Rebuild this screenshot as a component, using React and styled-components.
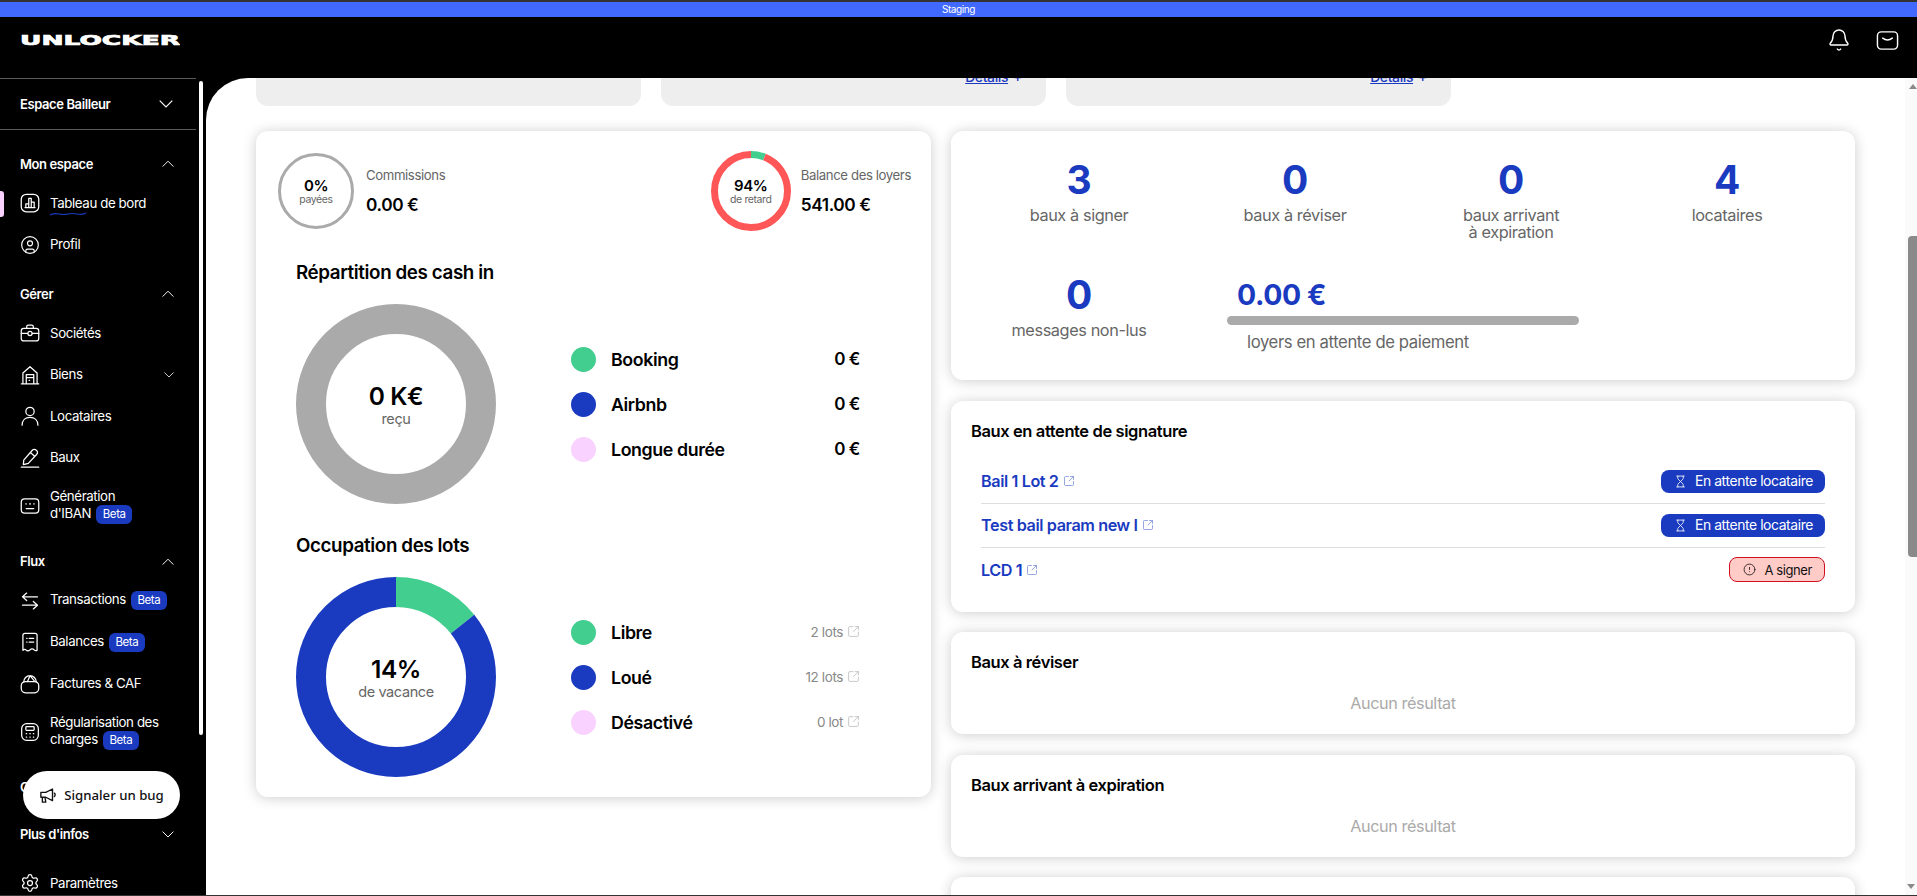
import React from "react";
import styled, { createGlobalStyle } from "styled-components";
import {
  Bell,
  CircleAlert,
  CircleUser,
  Hourglass,
  Settings,
  SquareArrowOutUpRight,
} from "lucide-react";

const BLUE = "#1a3bbf";
const GREEN = "#41ce8e";
const PINK = "#fad2ff";
const RED = "#ff5757";
const GREY = "#aaaaaa";

const GlobalStyle = createGlobalStyle`
  html, body {
    margin: 0;
    height: 100%;
    overflow: hidden;
    background: #000;
  }
  body {
    font-family: "Inter", "Liberation Sans", sans-serif;
    letter-spacing: -0.025em;
  }
  #root { height: 100%; }
`;

const Page = styled.div`
  height: 100vh;
  box-sizing: border-box;
  display: flex;
  flex-direction: column;
  border-top: 2px solid #333;
  border-bottom: 1px solid #333;
  position: relative;
`;

const EnvBar = styled.div`
  height: 15px;
  flex: none;
  background: #4169ff;
  color: #fff;
  font-size: 10px;
  line-height: 15px;
  text-align: center;
`;

const Header = styled.header`
  height: 61px;
  box-sizing: border-box;
  flex: none;
  background: #000;
  display: flex;
  align-items: center;
  justify-content: space-between;
  padding: 0 18px 15px 20px;
  color: #fff;
`;

const LogoText = styled.text`
  font-family: "DejaVu Sans", sans-serif;
  font-weight: 700;
  font-size: 14px;
  letter-spacing: 0;
  fill: #fff;
  stroke: #fff;
  stroke-width: 0.7px;
`;

const HeaderIcons = styled.div`
  display: flex;
  align-items: center;
  gap: 25px;
`;

const Body = styled.div`
  flex: 1;
  min-height: 0;
  display: flex;
`;

const Sidebar = styled.aside`
  width: 206px;
  flex: none;
  background: #000;
  color: #fff;
  overflow: hidden;
  position: relative;
  font-size: 13.3px;
`;

const SideThumb = styled.div`
  position: absolute;
  left: 199px;
  top: 3px;
  width: 4px;
  height: 654px;
  border-radius: 2px;
  background: #fff;
`;

const SpaceRow = styled.div`
  width: 196px;
  height: 52px;
  box-sizing: border-box;
  border-top: 1px solid #5a5a5a;
  border-bottom: 1px solid #5a5a5a;
  display: flex;
  align-items: center;
  justify-content: space-between;
  padding: 0 23px 0 20px;
  font-weight: 600;
  font-size: 13px;
  margin-bottom: 15px;
`;

const Group = styled.div`
  width: 196px;
  margin-bottom: ${(p) => (p.$tight ? "9.5px" : "9.5px")};
`;

const GroupHead = styled.div`
  height: 37.5px;
  display: flex;
  align-items: center;
  justify-content: space-between;
  padding: 0 22px 0 20px;
  font-weight: 600;
  font-size: 13px;
`;

const Item = styled.div`
  position: relative;
  height: ${(p) => (p.$tall ? "54.5px" : "41.5px")};
  display: flex;
  align-items: center;
  gap: 10px;
  padding: 0 22px 0 20px;
  line-height: 17px;
`;

const ActiveMark = styled.span`
  position: absolute;
  left: 0;
  top: 8px;
  width: 4px;
  height: 26px;
  border-radius: 0 3px 3px 0;
  background: ${PINK};
`;

const ItemIcon = styled.span`
  width: 20px;
  flex: none;
  display: flex;
  justify-content: center;
`;

const ItemLabel = styled.span`
  flex: 1;
  position: relative;
`;

const Squiggle = styled.svg`
  position: absolute;
  left: 0;
  top: 17px;
`;

const Beta = styled.span`
  display: inline-block;
  width: 36px;
  height: 19px;
  margin-left: 5px;
  border-radius: 6px;
  background: ${BLUE};
  color: #fff;
  font-size: 11.5px;
  line-height: 19px;
  text-align: center;
  vertical-align: middle;
`;

const BugButton = styled.button`
  position: absolute;
  left: 23px;
  bottom: 76px;
  width: 157px;
  height: 48px;
  border: 0;
  border-radius: 24px;
  background: #fff;
  color: #111;
  display: flex;
  align-items: center;
  justify-content: center;
  gap: 7px;
  font-family: "Noto Sans", sans-serif;
  font-size: 13.2px;
  font-weight: 500;
  letter-spacing: 0;
`;

const Main = styled.main`
  flex: 1;
  min-width: 0;
  display: flex;
  background: #fff;
  border-top-left-radius: 42px;
  overflow: hidden;
`;

const Content = styled.div`
  flex: 1;
  min-width: 0;
  padding-left: 50px;
`;

const ScrollTrack = styled.div`
  width: 12px;
  flex: none;
  background: #fafafa;
  display: flex;
  flex-direction: column;
  align-items: flex-end;
`;

const ScrollArrow = styled.span`
  width: 0;
  height: 0;
  margin: ${(p) => (p.$down ? "auto 2px 6px 0" : "6px 0 0 0")};
  border-left: 4px solid transparent;
  border-right: 4px solid transparent;
  ${(p) => (p.$down ? "border-top" : "border-bottom")}: 5px solid #8a8a8a;
`;

const ScrollThumb = styled.div`
  width: 9px;
  height: 321px;
  margin-top: 147px;
  border-radius: 4px 0 0 4px;
  background: #8a8a8a;
`;

const SummaryRow = styled.div`
  display: flex;
  gap: 20px;
  margin-bottom: 25px;
`;

const SummaryCard = styled.div`
  width: 385px;
  height: 28px;
  box-sizing: border-box;
  overflow: hidden;
  display: flex;
  align-items: flex-end;
  justify-content: flex-end;
  padding: 0 24px 21px 0;
  background: #eeeeee;
  border-radius: 0 0 12px 12px;
`;

const DetailsLink = styled.a`
  color: ${BLUE};
  font-size: 14px;
  font-weight: 500;
  line-height: 16px;
  white-space: nowrap;
  span {
    display: inline-block;
    margin-left: 5px;
  }
  u {
    text-decoration-thickness: 1px;
  }
`;

const Columns = styled.div`
  display: grid;
  grid-template-columns: 675px 904px;
  gap: 20px;
  align-items: start;
`;

const Card = styled.section`
  background: #fff;
  border-radius: 12px;
  box-shadow: 0 1px 14px rgba(0, 0, 0, 0.2);
`;

const LeftCard = styled(Card)`
  padding: 20px 0;
`;

const StatsTop = styled.div`
  display: flex;
  justify-content: space-between;
  align-items: center;
  height: 80px;
  padding: 0 20px 0 22px;
`;

const StatGroup = styled.div`
  display: flex;
  align-items: center;
  gap: ${(p) => p.$gap}px;
`;

const RingBox = styled.div`
  display: grid;
  place-items: center;
  width: ${(p) => p.$size}px;
  height: ${(p) => p.$size}px;
  svg, div {
    grid-area: 1 / 1;
  }
`;

const RingText = styled.div`
  text-align: center;
`;

const RingValue = styled.div`
  font-size: ${(p) => (p.$large ? "24.5px" : "15px")};
  font-weight: 600;
  line-height: ${(p) => (p.$large ? "28px" : "17px")};
  color: #000;
`;

const RingCaption = styled.div`
  font-size: ${(p) => (p.$large ? "14.5px" : "10.5px")};
  line-height: ${(p) => (p.$large ? "15px" : "12px")};
  color: #666;
  margin-top: ${(p) => (p.$large ? "1px" : "0")};
`;

const StatName = styled.div`
  font-size: 13.2px;
  line-height: 17px;
  color: #666;
  margin-bottom: 11px;
`;

const StatValue = styled.div`
  font-size: 17.3px;
  font-weight: 600;
  line-height: 20px;
  color: #000;
`;

const ChartTitle = styled.h2`
  margin: 30px 0 19px 40px;
  font-size: 18.8px;
  font-weight: 600;
  line-height: 24px;
  color: #000;
`;

const ChartRow = styled.div`
  display: flex;
  align-items: center;
  gap: 75px;
  padding: 0 71px 0 40px;
`;

const Legend = styled.div`
  flex: 1;
  display: flex;
  flex-direction: column;
  gap: 20px;
`;

const LegendRow = styled.div`
  height: 25px;
  display: flex;
  align-items: center;
  gap: 15px;
`;

const Dot = styled.span`
  width: 25px;
  height: 25px;
  flex: none;
  border-radius: 50%;
  background: ${(p) => p.$color};
`;

const LegendName = styled.span`
  flex: 1;
  font-size: 17.8px;
  font-weight: 600;
  color: #000;
`;

const LegendAmount = styled.span`
  font-size: 17px;
  font-weight: 600;
  color: #000;
`;

const LegendLots = styled.span`
  display: flex;
  align-items: center;
  gap: 4px;
  font-size: 13.5px;
  color: #888;
  svg {
    color: #bbb;
    margin-top: -2px;
  }
`;

const RightColumn = styled.div`
  display: flex;
  flex-direction: column;
  gap: 20.5px;
`;

const KpiCard = styled(Card)`
  height: 249px;
  box-sizing: border-box;
  padding: 27px 20px 0;
  display: grid;
  grid-template-columns: repeat(4, 216px);
  grid-template-rows: 82px auto;
  row-gap: 33px;
`;

const Kpi = styled.div`
  text-align: center;
`;

const KpiValue = styled.div`
  font-size: 39px;
  font-weight: 700;
  line-height: 44px;
  color: ${BLUE};
`;

const KpiLabel = styled.div`
  margin-top: 5px;
  font-size: 16.3px;
  line-height: 17px;
  color: #666;
`;

const MoneyKpi = styled.div`
  grid-column: span 2;
  padding: 2px 40px 0;
`;

const MoneyValue = styled.div`
  padding-left: 10px;
  font-size: 28.4px;
  font-weight: 700;
  line-height: 40px;
  color: ${BLUE};
`;

const MoneyBar = styled.div`
  height: 9px;
  margin-top: 1px;
  border-radius: 5px;
  background: ${GREY};
`;

const MoneyLabel = styled(KpiLabel)`
  margin-top: 9px;
  padding-left: 20px;
  font-size: 16.7px;
`;

const ListCard = styled(Card)`
  padding: 20px 20px 21px;
`;

const LeaseCard = styled(ListCard)`
  padding-bottom: 20px;
`;

const CardTitle = styled.h3`
  margin: 0;
  font-size: 16.5px;
  font-weight: 600;
  line-height: 20px;
  color: #000;
`;

const LeaseList = styled.div`
  margin: 19px 10px 0;
`;

const LeaseRow = styled.div`
  height: 44px;
  box-sizing: border-box;
  display: flex;
  align-items: center;
  justify-content: space-between;
  border-bottom: 1px solid #dedede;
  &:last-child {
    border-bottom: 0;
  }
`;

const LeaseLink = styled.a`
  display: flex;
  align-items: center;
  gap: 4px;
  color: ${BLUE};
  font-size: 16.2px;
  font-weight: 600;
  svg {
    opacity: 0.6;
  }
`;

const Status = styled.span`
  display: flex;
  align-items: center;
  box-sizing: border-box;
  gap: 8px;
  height: ${(p) => (p.$alert ? "25px" : "23px")};
  padding: 0 12px 0 13px;
  border-radius: 8px;
  font-size: ${(p) => (p.$alert ? "13px" : "13.9px")};
  background: ${(p) => (p.$alert ? "#ffcbc6" : BLUE)};
  color: ${(p) => (p.$alert ? "#111" : "#fff")};
  border: ${(p) => (p.$alert ? "1px solid #d01020" : "0")};
`;

const EmptyText = styled.div`
  margin-top: 21px;
  height: 20px;
  font-size: 16.2px;
  line-height: 20px;
  text-align: center;
  color: #aaa;
`;

const Glyph = ({ size = 20, width = 1.5, children }) => (
  <svg
    width={size}
    height={size}
    viewBox="0 0 24 24"
    fill="none"
    stroke="currentColor"
    strokeWidth={width}
    strokeLinecap="round"
    strokeLinejoin="round"
  >
    {children}
  </svg>
);

const icons = {
  board: (
    <Glyph>
      <rect x="1.5" y="1.5" width="21" height="21" rx="6" />
      <path d="M6 17.5h12M7 17.5V13h3.5M10.5 17.5V6.5h3v11M13.5 11H17v6.5" />
    </Glyph>
  ),
  case: (
    <Glyph>
      <rect x="1.5" y="6.5" width="21" height="15" rx="3" />
      <path d="M8 6.5V4.5a2 2 0 0 1 2-2h4a2 2 0 0 1 2 2v2M1.5 12.5h7.5M15 12.5h7.5" />
      <circle cx="12" cy="12.5" r="2.5" />
    </Glyph>
  ),
  barn: (
    <Glyph size={22}>
      <path d="M1.5 22.5h21M3.5 22.5V9.5L12 2l8.5 7.5v13M7.5 22.5V11.5h9v11M7.5 15h9M11 18.5h.5" />
    </Glyph>
  ),
  user: (
    <Glyph>
      <circle cx="12" cy="6.5" r="5" />
      <path d="M2.5 23c0-6 4-9.5 9.5-9.5s9.5 3.5 9.5 9.5" />
    </Glyph>
  ),
  pencil: (
    <Glyph>
      <path d="M4.5 14.5 14.5 3a3.6 3.6 0 0 1 5.4 4.8L10 18.5l-6 1.5zM12.5 5.5l5 4.5M1.5 23h21" />
    </Glyph>
  ),
  iban: (
    <Glyph>
      <rect x="1.5" y="3.5" width="21" height="17" rx="4" />
      <path d="M7 9.5h.5M11.5 9.5h1M16.5 9.5h.5M7.5 15h9" />
    </Glyph>
  ),
  swap: (
    <Glyph>
      <path d="M8 2.5 3 7l5 4.5M3 7h18M16 12.5l5 4.5-5 4.5M21 17H3" />
    </Glyph>
  ),
  receipt: (
    <Glyph>
      <path d="M6 1.5h12a2.5 2.5 0 0 1 2.5 2.5v18q-2 1-3.5-.5-2.5-2.5-5 0-2.5 2.5-5 0-1.5-1.5-3.5.5V4A2.5 2.5 0 0 1 6 1.5zM8 7.5h.5M11 7.5h5.5M8 12h.5M11 12h5.5" />
    </Glyph>
  ),
  bag: (
    <Glyph>
      <rect x="1.5" y="9" width="21" height="13.5" rx="5" />
      <path d="M4.5 9.5a7.5 7.5 0 0 1 15 0M12 2l-3 7M12 2l5 6" />
    </Glyph>
  ),
  calc: (
    <Glyph>
      <rect x="2" y="2" width="20" height="20" rx="6" />
      <rect x="7" y="5.5" width="10" height="4.5" rx="1" />
      <path d="M7.5 14h.5M11.8 14h.5M16 14h.5M7.5 18h.5M11.8 18h.5M16 18h.5" />
    </Glyph>
  ),
  gear: <Settings size={20} strokeWidth={1.5} />,
  profile: <CircleUser size={20} strokeWidth={1.4} />,
};

const Chevron = ({ up, width = 12 }) => (
  <svg width={width} height={width * 0.6} viewBox="0 0 20 12" fill="none" stroke="currentColor" strokeWidth="1.6">
    <polyline points={up ? "1,11 10,2 19,11" : "1,1 10,10 19,1"} />
  </svg>
);

const Donut = ({ size, stroke, segments, children }) => {
  const r = (size - stroke) / 2;
  const length = 2 * Math.PI * r;
  let used = 0;
  return (
    <RingBox $size={size}>
      <svg width={size} height={size} style={{ transform: "rotate(-90deg)" }}>
        {segments.map(([share, color]) => {
          const arc = (
            <circle
              key={color}
              cx={size / 2}
              cy={size / 2}
              r={r}
              fill="none"
              stroke={color}
              strokeWidth={stroke}
              strokeDasharray={`${share * length} ${length}`}
              strokeDashoffset={-used * length}
            />
          );
          used += share;
          return arc;
        })}
      </svg>
      <RingText>{children}</RingText>
    </RingBox>
  );
};

const navGroups = [
  {
    title: "Mon espace",
    items: [
      { label: ["Tableau de bord"], icon: "board", active: true },
      { label: ["Profil"], icon: "profile" },
    ],
  },
  {
    title: "Gérer",
    items: [
      { label: ["Sociétés"], icon: "case" },
      { label: ["Biens"], icon: "barn", more: true },
      { label: ["Locataires"], icon: "user" },
      { label: ["Baux"], icon: "pencil" },
      { label: ["Génération", "d'IBAN"], icon: "iban", beta: true },
    ],
  },
  {
    title: "Flux",
    items: [
      { label: ["Transactions"], icon: "swap", beta: true },
      { label: ["Balances"], icon: "receipt", beta: true },
      { label: ["Factures & CAF"], icon: "bag" },
      { label: ["Régularisation des", "charges"], icon: "calc", beta: true },
    ],
  },
  { title: "Comptabilité", closed: true, items: [] },
  { title: "Plus d'infos", closed: true, items: [] },
];

const kpis = [
  ["3", ["baux à signer"]],
  ["0", ["baux à réviser"]],
  ["0", ["baux arrivant", "à expiration"]],
  ["4", ["locataires"]],
];

const ExternalIcon = ({ size = 13 }) => <SquareArrowOutUpRight size={size} strokeWidth={1.5} />;

const LegendBlock = ({ rows }) => (
  <Legend>
    {rows.map(([name, color, amount, lots]) => (
      <LegendRow key={name}>
        <Dot $color={color} />
        <LegendName>{name}</LegendName>
        {amount ? (
          <LegendAmount>{amount}</LegendAmount>
        ) : (
          <LegendLots>
            {lots}
            <ExternalIcon />
          </LegendLots>
        )}
      </LegendRow>
    ))}
  </Legend>
);

const leases = [
  ["Bail 1 Lot 2", false],
  ["Test bail param new I", false],
  ["LCD 1", true],
];

const App = () => {
  return (
    <Page>
      <GlobalStyle />
      <EnvBar>Staging</EnvBar>
      <Header>
        <svg width="160" height="12" viewBox="0 0 160 12">
          <LogoText x="0" y="11" textLength="160" lengthAdjust="spacingAndGlyphs">
            UNLOCKER
          </LogoText>
        </svg>
        <HeaderIcons>
          <Bell size={24} strokeWidth={1.4} />
          <Glyph size={23}>
            <rect x="1.5" y="3" width="21" height="18" rx="4" />
            <path d="M7 9.5q5 4 10 0" />
          </Glyph>
        </HeaderIcons>
      </Header>
      <Body>
        <Sidebar>
          <SpaceRow>
            Espace Bailleur
            <Chevron width={14} />
          </SpaceRow>
          {navGroups.map((group) => (
            <Group key={group.title}>
              <GroupHead>
                {group.title}
                <Chevron up={!group.closed} />
              </GroupHead>
              {group.items.map((item) => (
                <Item key={item.label[0]} $tall={item.label.length > 1}>
                  {item.active && <ActiveMark />}
                  <ItemIcon>{icons[item.icon]}</ItemIcon>
                  <ItemLabel>
                    {item.label.length > 1 && (
                      <>
                        {item.label[0]}
                        <br />
                      </>
                    )}
                    {item.label[item.label.length - 1]}
                    {item.beta && <Beta>Beta</Beta>}
                    {item.active && (
                      <Squiggle width="36" height="4" viewBox="0 0 36 4" fill="none">
                        <path d="M0 3q4-2 9-1t9 0 9 0 9-1" stroke={BLUE} strokeWidth="1.2" />
                      </Squiggle>
                    )}
                  </ItemLabel>
                  {item.more && <Chevron width={10} />}
                </Item>
              ))}
            </Group>
          ))}
          <Item>
            <ItemIcon>{icons.gear}</ItemIcon>
            <ItemLabel>Paramètres</ItemLabel>
          </Item>
          <SideThumb />
        </Sidebar>
        <Main>
          <Content>
            <SummaryRow>
              <SummaryCard />
              <SummaryCard>
                <DetailsLink>
                  <u>Détails</u>
                  <span>+</span>
                </DetailsLink>
              </SummaryCard>
              <SummaryCard>
                <DetailsLink>
                  <u>Détails</u>
                  <span>+</span>
                </DetailsLink>
              </SummaryCard>
            </SummaryRow>
            <Columns>
              <LeftCard>
                <StatsTop>
                  <StatGroup $gap={12}>
                    <Donut size={76} stroke={3} segments={[[1, GREY]]}>
                      <RingValue>0%</RingValue>
                      <RingCaption>payées</RingCaption>
                    </Donut>
                    <div>
                      <StatName>Commissions</StatName>
                      <StatValue>0.00 €</StatValue>
                    </div>
                  </StatGroup>
                  <StatGroup $gap={10}>
                    <Donut size={80} stroke={7} segments={[[0.06, GREEN], [0.94, RED]]}>
                      <RingValue>94%</RingValue>
                      <RingCaption>de retard</RingCaption>
                    </Donut>
                    <div>
                      <StatName>Balance des loyers</StatName>
                      <StatValue>541.00 €</StatValue>
                    </div>
                  </StatGroup>
                </StatsTop>
                <ChartTitle>Répartition des cash in</ChartTitle>
                <ChartRow>
                  <Donut size={200} stroke={30} segments={[[1, GREY]]}>
                    <RingValue $large>0 K€</RingValue>
                    <RingCaption $large>reçu</RingCaption>
                  </Donut>
                  <LegendBlock
                    rows={[
                      ["Booking", GREEN, "0 €"],
                      ["Airbnb", BLUE, "0 €"],
                      ["Longue durée", PINK, "0 €"],
                    ]}
                  />
                </ChartRow>
                <ChartTitle>Occupation des lots</ChartTitle>
                <ChartRow>
                  <Donut size={200} stroke={30} segments={[[1 / 7, GREEN], [6 / 7, BLUE]]}>
                    <RingValue $large>14%</RingValue>
                    <RingCaption $large>de vacance</RingCaption>
                  </Donut>
                  <LegendBlock
                    rows={[
                      ["Libre", GREEN, null, "2 lots"],
                      ["Loué", BLUE, null, "12 lots"],
                      ["Désactivé", PINK, null, "0 lot"],
                    ]}
                  />
                </ChartRow>
              </LeftCard>
              <RightColumn>
                <KpiCard>
                  {kpis.map(([value, lines], index) => (
                    <Kpi key={index}>
                      <KpiValue>{value}</KpiValue>
                      <KpiLabel>
                        {lines.map((line) => (
                          <div key={line}>{line}</div>
                        ))}
                      </KpiLabel>
                    </Kpi>
                  ))}
                  <Kpi>
                    <KpiValue>0</KpiValue>
                    <KpiLabel>messages non-lus</KpiLabel>
                  </Kpi>
                  <MoneyKpi>
                    <MoneyValue>0.00 €</MoneyValue>
                    <MoneyBar />
                    <MoneyLabel>loyers en attente de paiement</MoneyLabel>
                  </MoneyKpi>
                </KpiCard>
                <LeaseCard>
                  <CardTitle>Baux en attente de signature</CardTitle>
                  <LeaseList>
                    {leases.map(([name, toSign]) => (
                      <LeaseRow key={name}>
                        <LeaseLink>
                          {name}
                          <ExternalIcon size={12} />
                        </LeaseLink>
                        {toSign ? (
                          <Status $alert>
                            <CircleAlert size={13} strokeWidth={1.5} />A signer
                          </Status>
                        ) : (
                          <Status>
                            <Hourglass size={13} strokeWidth={1.5} />
                            En attente locataire
                          </Status>
                        )}
                      </LeaseRow>
                    ))}
                  </LeaseList>
                </LeaseCard>
                <ListCard>
                  <CardTitle>Baux à réviser</CardTitle>
                  <EmptyText>Aucun résultat</EmptyText>
                </ListCard>
                <ListCard>
                  <CardTitle>Baux arrivant à expiration</CardTitle>
                  <EmptyText>Aucun résultat</EmptyText>
                </ListCard>
                <ListCard>
                  <CardTitle>Baux à renouveler</CardTitle>
                </ListCard>
              </RightColumn>
            </Columns>
          </Content>
          <ScrollTrack>
            <ScrollArrow />
            <ScrollThumb />
            <ScrollArrow $down />
          </ScrollTrack>
        </Main>
      </Body>
      <BugButton>
        <Glyph size={18} width={1.8}>
          <path d="M2.5 8.5H9L18 4v15.5l-9-4.5H2.5zM20.5 9.5a3 3 0 0 1 0 4.5M4.5 15v6.5H9L8 15" />
        </Glyph>
        Signaler un bug
      </BugButton>
    </Page>
  );
};

export default App;
